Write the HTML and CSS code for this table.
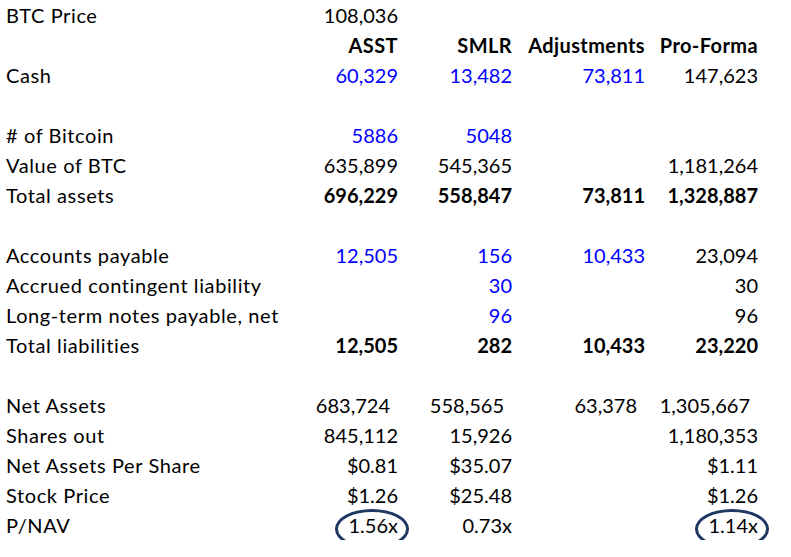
FILE: index.html
```html
<!DOCTYPE html>
<html lang="en">
<head>
    <meta charset="UTF-8">
    <title>ASST / SMLR Pro-Forma</title>
    <link rel="stylesheet" href="styles.css">
</head>
<body>
<div class="sheet">
    <!-- price -->
    <div class="label">BTC Price</div>
    <div class="num">108,036</div>
    <div></div><div></div><div></div>

    <!-- headers -->
    <div class="label"></div>
    <div class="num bold head">ASST</div>
    <div class="num bold head">SMLR</div>
    <div class="num bold head">Adjustments</div>
    <div class="num bold head">Pro-Forma</div>

    <div class="label">Cash</div>
    <div class="num input">60,329</div>
    <div class="num input">13,482</div>
    <div class="num input">73,811</div>
    <div class="num">147,623</div>

    <div class="gap"></div>

    <div class="label"># of Bitcoin</div>
    <div class="num input">5886</div>
    <div class="num input">5048</div>
    <div></div><div></div>

    <div class="label">Value of BTC</div>
    <div class="num">635,899</div>
    <div class="num">545,365</div>
    <div></div>
    <div class="num">1,181,264</div>

    <div class="label">Total assets</div>
    <div class="num bold">696,229</div>
    <div class="num bold">558,847</div>
    <div class="num bold">73,811</div>
    <div class="num bold">1,328,887</div>

    <div class="gap"></div>

    <!-- liabilities -->
    <div class="label">Accounts payable</div>
    <div class="num input">12,505</div>
    <div class="num input">156</div>
    <div class="num input">10,433</div>
    <div class="num">23,094</div>

    <div class="label">Accrued contingent liability</div>
    <div></div>
    <div class="num input">30</div>
    <div></div>
    <div class="num">30</div>

    <div class="label">Long-term notes payable, net</div>
    <div></div>
    <div class="num input">96</div>
    <div></div>
    <div class="num">96</div>

    <div class="label">Total liabilities</div>
    <div class="num bold">12,505</div>
    <div class="num bold">282</div>
    <div class="num bold">10,433</div>
    <div class="num bold">23,220</div>

    <div class="gap"></div>

    <!-- valuation -->
    <div class="label">Net Assets</div>
    <div class="num acct">683,724</div>
    <div class="num acct">558,565</div>
    <div class="num acct">63,378</div>
    <div class="num acct">1,305,667</div>

    <div class="label">Shares out</div>
    <div class="num">845,112</div>
    <div class="num">15,926</div>
    <div></div>
    <div class="num">1,180,353</div>

    <div class="label">Net Assets Per Share</div>
    <div class="num">$0.81</div>
    <div class="num">$35.07</div>
    <div></div>
    <div class="num">$1.11</div>

    <div class="label">Stock Price</div>
    <div class="num">$1.26</div>
    <div class="num">$25.48</div>
    <div></div>
    <div class="num">$1.26</div>

    <div class="label">P/NAV</div>
    <div class="num"><span class="circled">1.56x</span></div>
    <div class="num">0.73x</div>
    <div></div>
    <div class="num"><span class="circled">1.14x</span></div>
</div>
</body>
</html>
```

FILE: styles.css
```css
* {
    margin: 0;
    padding: 0;
    box-sizing: border-box;
}

body {
    background: #fff;
    font-family: Lato, 'Liberation Sans', sans-serif;
    font-size: 20px;
    color: #000;
}

.sheet {
    display: grid;
    grid-template-columns: 302px 100px 114px 133px 113px;
    grid-auto-rows: 30px;
    width: 791px;
}

.sheet > div {
    display: flex;
    align-items: center;
    white-space: nowrap;
}

.label {
    padding-left: 6px;
    letter-spacing: 0.6px;
}

.num {
    justify-content: flex-end;
    padding-right: 4px;
}

.num.head {
    letter-spacing: 0.4px;
}

.num.acct {
    padding-right: 12px;
}

.bold {
    font-weight: 700;
}

.input {
    color: #0000ff;
}

.gap {
    grid-column: 1 / -1;
}

.circled {
    position: relative;
}

.circled::after {
    content: "";
    position: absolute;
    left: -14px;
    right: -11px;
    top: 50%;
    height: 34px;
    margin-top: -16px;
    border: 3px solid #1f3864;
    border-radius: 50%;
}
```
